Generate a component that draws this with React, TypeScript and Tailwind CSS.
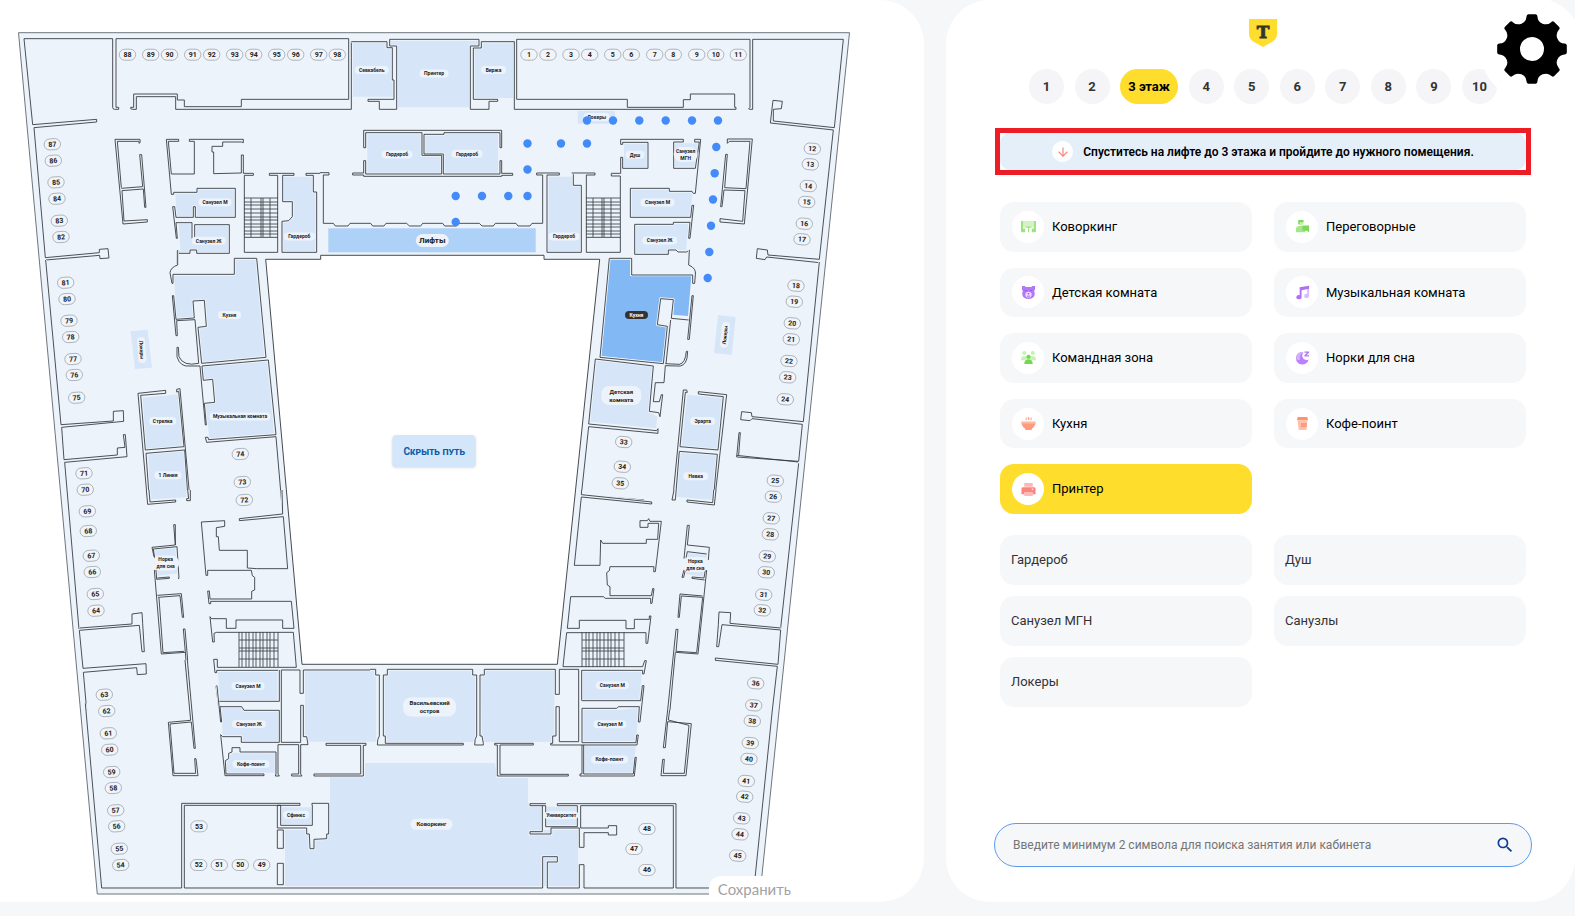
import type { ReactNode } from "react"
import { ArrowDown } from "lucide-react"
import { MdSearch } from "react-icons/md"

type Pin = [label: string, x: number, y: number]

/* Desk numbers, grouped by how they are tilted */
const straightDesks: Pin[] = [
  ["88", 127.5, 54.7], ["89", 150.7, 54.7], ["90", 169.5, 54.7], ["91", 192.7, 54.7], ["92", 211.7, 54.7],
  ["93", 234.7, 54.7], ["94", 253.7, 54.7], ["95", 276.7, 54.7], ["96", 295.7, 54.7], ["97", 318.7, 54.7],
  ["98", 337.3, 54.7], ["1", 529, 54.7], ["2", 548, 54.7], ["3", 571, 54.7], ["4", 589.7, 54.7],
  ["5", 612.7, 54.7], ["6", 631.3, 54.7], ["7", 654.7, 54.7], ["8", 673.3, 54.7], ["9", 696.7, 54.7],
  ["10", 715.7, 54.7], ["11", 738.3, 54.7], ["46", 647, 870], ["47", 634, 849], ["48", 647, 829],
  ["53", 199, 826.3], ["52", 198.7, 865], ["51", 219.3, 865], ["50", 240.3, 865], ["49", 261.7, 865],
]

const leftDesks: Pin[] = [
  ["87", 52.3, 144.3], ["86", 53.3, 160.7], ["85", 56, 182.3], ["84", 57, 198.7], ["83", 59.3, 220.7],
  ["82", 61, 237], ["81", 65.7, 282.7], ["80", 67, 299], ["79", 69, 320.7], ["78", 70.7, 337],
  ["77", 73, 359], ["76", 74.3, 375], ["75", 76.7, 397.7], ["71", 84, 473.3], ["70", 85.3, 489.7],
  ["69", 87.3, 511.3], ["68", 88.3, 531], ["67", 91.3, 555.7], ["66", 92.3, 572], ["65", 95.3, 594],
  ["64", 96, 610.7], ["63", 104.3, 694.7], ["62", 106.7, 711], ["61", 108.3, 733.3], ["60", 109.7, 749.7],
  ["59", 111.7, 772], ["58", 113.3, 788], ["57", 115.7, 810.3], ["56", 116.7, 826.3], ["55", 119.3, 848.7],
  ["54", 120.7, 865], ["74", 240.3, 454], ["73", 242.3, 482], ["72", 244.3, 500],
]

const rightDesks: Pin[] = [
  ["12", 812.3, 148.7], ["13", 810.3, 164.3], ["14", 808.3, 186], ["15", 806.7, 202], ["16", 804.3, 223.7],
  ["17", 802, 239.3], ["18", 796, 285.7], ["19", 794.3, 301.7], ["20", 792.3, 323.3], ["21", 791.3, 339.3],
  ["22", 789, 361], ["23", 787.7, 377.3], ["24", 785.3, 399.3], ["25", 775.3, 480.7], ["26", 773.3, 496.7],
  ["27", 771.3, 518.3], ["28", 770.3, 534.3], ["29", 767.3, 556.3], ["30", 766.3, 572.3], ["31", 763.7, 594.7],
  ["32", 762.3, 610.3], ["36", 755.7, 683.3], ["37", 753.7, 705.3], ["38", 752.3, 721], ["39", 750.3, 743],
  ["40", 749, 759], ["41", 746.3, 781], ["42", 744.7, 796.7], ["43", 741.7, 818.3], ["44", 740, 834.3],
  ["45", 737.7, 855.7], ["33", 623.7, 442], ["34", 622.3, 466.7], ["35", 620.3, 483.3],
]

interface RoomLabel {
  text: string
  x: number
  y: number
  w: number
  size?: number
  rotate?: number
  dark?: boolean
}

const roomLabels: RoomLabel[] = [
  { text: "Севкабель", x: 371.7, y: 70, w: 34 },
  { text: "Принтер", x: 434, y: 73.5, w: 29 },
  { text: "Биржа", x: 493.5, y: 70, w: 25 },
  { text: "Гардероб", x: 397, y: 154.5, w: 31 },
  { text: "Гардероб", x: 467, y: 153.7, w: 31 },
  { text: "Локеры", x: 596.7, y: 117, w: 26 },
  { text: "Лифты", x: 432.3, y: 240.5, w: 33, size: 8 },
  { text: "Гардероб", x: 299.3, y: 236.5, w: 31 },
  { text: "Гардероб", x: 564, y: 236.5, w: 31 },
  { text: "Санузел М", x: 215, y: 202.3, w: 33 },
  { text: "Санузел Ж", x: 208.7, y: 240.7, w: 34 },
  { text: "Душ", x: 635, y: 154.7, w: 19 },
  { text: "Санузел\nМГН", x: 685.7, y: 154.5, w: 24 },
  { text: "Санузел М", x: 657.5, y: 202.5, w: 34 },
  { text: "Санузел Ж", x: 659.7, y: 240.5, w: 35 },
  { text: "Кухня", x: 229.5, y: 315, w: 23 },
  { text: "Кухня", x: 636.5, y: 315, w: 23, dark: true },
  { text: "Детская\nкомната", x: 621.3, y: 395.5, w: 40, size: 6 },
  { text: "Музыкальная комната", x: 240, y: 416.5, w: 61 },
  { text: "Стрелка", x: 162.7, y: 421, w: 27 },
  { text: "1 Линия", x: 168, y: 475.3, w: 27 },
  { text: "Эрарта", x: 702.7, y: 421, w: 25 },
  { text: "Невка", x: 695.7, y: 476.3, w: 25 },
  { text: "Норка\nдля сна", x: 165.7, y: 563, w: 27 },
  { text: "Норка\nдля сна", x: 695.3, y: 564.5, w: 27 },
  { text: "Санузел М", x: 248, y: 686, w: 33 },
  { text: "Санузел Ж", x: 249, y: 724, w: 34 },
  { text: "Кофе-поинт", x: 251, y: 764, w: 37 },
  { text: "Васильевский\nостров", x: 429.5, y: 707, w: 53, size: 6 },
  { text: "Коворкинг", x: 431.5, y: 824.3, w: 42, size: 6 },
  { text: "Сфинкс", x: 296, y: 814.7, w: 26 },
  { text: "Университет", x: 561.3, y: 815.3, w: 34 },
  { text: "Санузел М", x: 612.3, y: 685.3, w: 33 },
  { text: "Санузел М", x: 610, y: 724.3, w: 33 },
  { text: "Кофе-поинт", x: 609.5, y: 759.5, w: 37 },
  { text: "Локеры", x: 141.7, y: 350, w: 26, rotate: 86 },
  { text: "Локеры", x: 725, y: 335, w: 26, rotate: -84 },
]

const route: [number, number][] = [
  [455.7, 222], [455.7, 196], [482, 196], [508.3, 196], [527.5, 196], [527.5, 169.5], [527.5, 143.5],
  [561, 143.5], [587, 143.5], [587, 120.5], [613, 120.5], [639.3, 120.5], [665.7, 120.5], [692, 120.5],
  [718, 120.5], [716.3, 147], [714.7, 173.3], [713, 199.5], [711, 225.7], [709.3, 252], [707.7, 278],
]

interface Wing {
  x: number
  y: number
  rooms: string
  walls: string
}

/* Every wing is drawn at three times the plan's scale, from its own top left corner */
const wings: Wing[] = [
  {
    x: 0,
    y: 20,
    rooms:
      "M526 518H592V508H704V590H530ZM536 612H576V655H584V616H686V698H592L568 690V698H542ZM852 470H914L936 472V516H948V694H848V604H866L878 590V545H852Z",
    walls:
      "M338 56H72L98 314L290 298V306L102 323L136 713L298 698V688L324 686L327 714L300 716L299 706L138 720M338 56V262Q338 268 344 268H356V262H348V56H1046V238H724V260H553V240H532V222H401V262H392Q390 268 398 268H409V230H527V268H1054V65" +
      "M364 503L352 364H417V370Q423 370 420 358H345L369 612L442 606V599L372 603L366 512L430 507L434 562H438L425 404H419L428 500L364 505" +
      "M536 364V358H499L514 523H521V517H591V505H706V592H586V560H580V592H528L524 560H518L529 655H532L528 608H576V655M505 364H536M505 364L514 462H583V364H568V358H730V368L724 366H668V379H636V396H641V461L724 459V405H730V460" +
      "M584 655V614H688V700H590V690H570V700H536V692H531V736Q518 738 510 750" +
      "M760 466V460H730M760 466H733V697H833V466H808V460H882V466H848V545H877V590L866 602L846 604V697H950V516H940V466H918V460H987M733 652H833",
  },
  {
    x: 320,
    y: 20,
    rooms:
      "M98 68H200V84H220V230H98ZM212 62H474V78H450V262H233V80H212ZM486 70H580V234H463V84H486ZM142 343H303V405H364V460H142ZM315 347L372 342H534V460H372V402H315ZM773 273H885V311H773ZM686 470H758V498H782V695H684Z",
    walls:
      "M94 65H201V83H217V180H222V238H144V244H178V268H230V78H209V58H477V78H451V268H507V244H533V238H460V84H484V65H583V268H750M750 58H590V238H750" +
      "M131 383V331H545V383H540V338H372V343H312V402H370V462H540V422H545V460H578V466H545V469H131V465H98V459H131V422H137V462H365V406H306V338H137V383Z" +
      "M0 458H27V465H10V610H40L46 618H84L90 610H152L158 618H192L198 610H260L268 618H302L308 610H368L374 618H410L416 610H478L486 618H520L526 610H588L594 618H630L636 610H668V465H650V459H718V465H681V697H784V496H760V459H825V466H800",
  },
  {
    x: 570,
    y: 20,
    rooms:
      "M162 370H232V442H162ZM313 370H384L374 440H313ZM184 508H296V516H368L360 590H184ZM198 617H310V611H356L348 690H318L295 698H198Z",
    walls:
      "M0 58H540V262Q532 268 540 268H548V58H820L793 323L610 303V268L634 266L637 244L609 241L601 309L790 330L748 718L594 705L592 690L562 686L559 715L585 719L590 711L748 728M0 238H172V262H340V239H361V222H494V262H498V268H0" +
      "M152 460V412H158V445H234V367H158V373H152V358H340V366H311V445H376L388 366H374V358H392L376 520H370L366 514H298V505H181V592H362L366 556H371L360 655H356L360 607H310V613H194V703H295V690H318L324 696H350L358 690V735L374 745" +
      "M5 459H75V465H49V697H151V468H124V460H152M49 652H151" +
      "M472 370V357H547L523 612L450 606V596L518 604L525 512L462 510L456 560H452L467 403H472L464 503L528 506L540 364H478Z",
  },
  {
    x: 20,
    y: 250,
    rooms:
      "M462 77H646V30H707L733 318L548 337L538 234L562 230L556 154L522 150L519 200L470 204ZM550 350L742 334L762 550L568 566L556 460L584 457L580 390L552 388ZM368 443L473 433L490 588L378 598ZM384 611L492 602L502 742L392 748ZM332 244L383 239L396 353L345 357Z",
    walls:
      "M77 30L123 524L280 513V484L310 482L311 514L125 532L132 629L292 615V594L315 592L310 554H316L321 620L134 637L177 1138" +
      "M473 0V45Q452 52 450 68L456 100H459V73H643V25H710L738 322L545 340L534 232L559 229L553 151L519 153L523 204L468 208L461 137H457L468 257H472L470 212L525 209L536 340Q490 350 477 320L475 292H471V320Q480 352 510 348H540L556 525H559L553 460L584 457L578 388L550 391L546 348L745 330L768 554L566 569L564 562H556L560 577L768 560L788 792" +
      "M437 421L354 430L382 750M437 421V430L362 436L376 600L492 590L476 424L470 426V418L480 416L510 750M388 750L378 610L494 600L504 745",
  },
  {
    x: 550,
    y: 250,
    rooms:
      "M140 332L308 348L298 486L322 500L318 535L120 515ZM412 434L518 444L502 598L394 588ZM392 607L500 616L488 750L378 740ZM504 195L557 201L545 315L492 309Z",
    walls:
      "M418 0L416 45Q440 55 436 75L434 100H428V75H245V25H178L150 322L340 341L352 229L322 224L332 146L370 149L364 205L416 210M362 210L348 341M426 137H430L418 268H413Z" +
      "M346 341L388 343Q406 340 409 304H413L411 325Q404 352 380 348L346 347L342 398H316L310 455H328L334 434H338L330 500L326 488L298 484L310 348L136 327L116 522L320 542L324 536L324 550L116 530L94 735L282 750" +
      "M808 36L760 515L606 500L604 488L575 485L572 509L600 512L606 506L757 523L746 634L560 621L567 548H571L566 615M746 640L692 1134M560 616L744 636" +
      "M368 750L400 420H410L412 427L406 427L390 590L504 600L520 440L445 432V425L530 434L494 750M376 750L388 604L502 613L490 750",
  },
  {
    x: 50,
    y: 490,
    rooms: "M312 180L375 172L384 250L318 258ZM504 545H684V632H510Z",
    walls:
      "M289 0L293 43L377 36V30L300 36L297 0M421 0V32H410V26H416L413 0" +
      "M314 205L310 177L381 170L387 265H384M376 165V104H371L376 165L306 172L312 200M313 240L334 492L406 487L400 417H405L426 660M318 240L320 268L358 265V261L322 264M324 322L390 317L397 382H401L394 311L322 316M327 324L339 488L402 484M420 660L406 487" +
      "M696 0L698 72L568 86V92L700 80L713 236H620L592 234V181H508L505 140H499V113L524 109V92L454 96L468 256H473V241H604L607 257L614 262V300L605 304V327H480L478 303H473L477 341H482V334H724L732 415H698V390H558V415H529V386H484L480 380L488 456H493L492 430L500 427H730L739 532H502V508H491L495 548H500V541H686V634H507L502 588H498L507 660" +
      "M90 414L246 402V372L276 368L278 400L283 485H276L268 406L88 421L99 535L288 521L289 552L262 554L260 533L100 547L110 660",
  },
  {
    x: 540,
    y: 490,
    rooms: "M128 545H306L298 628H128ZM442 188H500L494 260L436 252Z",
    walls:
      "M125 0L124 14L335 36V42L124 21L103 226H180L182 150L188 160H319V148H353L356 100H324V112H300V92H322L326 86L330 94H364L346 245H341L342 230H210L208 242L200 248L202 285L210 290V317H334L338 296H342L336 340H332V325H196L190 320H92L82 415H118V391H258V416H283V388H328V378H333L323 460H318V428H80L69 530H308L314 512H319L312 552H308V541H125V631H300L308 587H313L302 660" +
      "M402 0L396 30H406V26M528 0L523 45L441 36V30L518 38L521 0" +
      "M432 206L442 106H448L442 165L508 172L505 210M438 205L442 185L500 192M432 240L426 262H431L436 240M500 240L474 492L408 487L414 418H408L383 660M496 240L492 264L456 261V265L494 270M488 318L420 312L414 382H418L424 318L488 322L470 488L410 484M390 660L406 487" +
      "M722 414L570 400L572 368L537 366L535 404L530 470H536L546 404L722 420L714 523L526 504V511L712 529L697 660",
  },
  {
    x: 70,
    y: 660,
    rooms: "M454 144H515L522 154H626V245H514V228H458ZM470 304L486 278H510L616 280V338H470ZM705 32H919V245H712V228H705ZM635 442H725V494H635Z",
    walls:
      "M46 130L95 684H335V430H690V436H343V684H900" +
      "M345 0L362 181L295 187L309 347H384L378 296H374L377 340H312L300 192L364 186L372 265H376L352 0" +
      "M441 78L452 186H455L450 140H515L522 151H628V247H514V230H458L452 224L465 347H582V342H468L466 302L476 296V280L486 276V263H510V276H618V342L616 348H628L624 342V254H686V342H665V348H696L692 342V254H714L710 230H700V136H692V247H634V30H690V100H700V30H900" +
      "M768 250H888V256H880V348H732V342H872V256H768Z" +
      "M628 30V124H448M632 436H622V504H710V522H718L720 566H732V538L770 536V522H776V430H726V436H727V496H632V436M622 510H640V565H622ZM622 610H640V674H622Z",
  },
  {
    x: 370,
    y: 650,
    rooms:
      "M50 62H306V76H316V276H42V76ZM332 76L342 62H553V276H336ZM638 180H742L806 174L798 274H638ZM643 288H798L788 368H643ZM527 470H622V526H527Z",
    walls:
      "M0 58H17V75H28V258Q22 265 22 285H280V280H46V258H40V75H52V58H308V75H320V258Q314 265 314 285H340V280L336 258H330V75H343V58H556V133H568V58H626V275H568V170H558V258H548V280H542V285H801L805 255H800L798 278H636V175H740L746 170H808L805 216H810L822 107H817L812 152H636" +
      "M374 280H490V285H390V373H595V378H382V285H374ZM636 285V372H630V378H793L799 322H795L790 372H641V285" +
      "M893 180L880 293H886L893 215L964 221L948 377H873L878 328H883L880 370H943L957 226L895 210L899 180" +
      "M1207 180L1152 714H918V461H562V467H622V530H527V467H480V461H528M517 467V545H480V552H543V534H628V592H642V548H715V555H740V527H715V534H632V467H910V714H642V644H628V714H532V636H562V620H518V714H0",
  },
]

/* Treads of the four staircases */
const stairs =
  "M244 198H278M244 202H278M244 205H278M244 209H278M244 213H278M244 217H278M244 220H278M244 224H278M244 227H278M244 231H278M244 234H278M251 198V237M261 198V237M263 198V237M270 198V237" +
  "M586 198H620M586 202H620M586 205H620M586 209H620M586 213H620M586 217H620M586 220H620M586 224H620M586 227H620M586 231H620M586 234H620M593 198V237M602 198V237M604 198V237M611 198V237" +
  "M239 632V667M242 632V667M246 632V667M249 632V667M253 632V667M256 632V667M260 632V667M263 632V667M267 632V667M270 632V667M274 632V667M278 632V667M239 640H278M239 648H278M239 651H278M239 659H278" +
  "M582 632V667M586 632V667M589 632V667M593 632V667M597 632V667M600 632V667M604 632V667M608 632V667M611 632V667M615 632V667M619 632V667M624 632V667M582 640H624M582 648H624M582 651H624M582 659H624"

function Desk({ pin, tilt = 0 }: { pin: Pin; tilt?: number }) {
  const [label, x, y] = pin
  return (
    <g transform={`translate(${x} ${y}) rotate(${tilt})`}>
      <rect x={-8.2} y={-5.5} width={16.4} height={11} rx={5.5} fill="#f1f5fa" stroke="#858b93" strokeWidth={0.6} />
      <text y={2.4} textAnchor="middle" className="fill-[#222] text-[7px] font-bold">
        {label}
      </text>
    </g>
  )
}

function RoomTag({ label }: { label: RoomLabel }) {
  const size = label.size ?? 5
  const lines = label.text.split("\n")
  const lineHeight = size + 2
  const height = lineHeight * lines.length + (size > 5 ? 3 : 1)
  return (
    <g transform={`translate(${label.x} ${label.y}) rotate(${label.rotate ?? 0})`}>
      <rect
        x={-label.w / 2}
        y={-height / 2}
        width={label.w}
        height={height}
        rx={Math.min(height / 2, 8)}
        fill={label.dark ? "#333" : "#edf3fa"}
      />
      {lines.map((line, i) => (
        <text
          key={line}
          y={(i - (lines.length - 1) / 2) * lineHeight + size * 0.36}
          textAnchor="middle"
          fontSize={size}
          fontWeight={700}
          fill={label.dark ? "#fff" : "#222"}
        >
          {line}
        </text>
      ))}
    </g>
  )
}

function FloorMap() {
  return (
    <svg viewBox="0 0 924 902" className="block w-full" role="img" aria-label="План 3 этажа">
      <path d="M18.5 32.7H849.5L760 894H97.3Z" fill="#ecf3fa" stroke="#6f757b" />
      <path
        d="M365 763H495L497 778H528V803L543 807V830H578V886H285V830H308L311 850L314 840L328 838L330 800V777H365Z"
        fill="#d6e6f8"
      />
      <rect x={328.3} y={228.3} width={207.4} height={24} fill="#add1f7" />
      {wings.map((wing) => (
        <g key={`${wing.x}-${wing.y}`} transform={`translate(${wing.x} ${wing.y}) scale(0.33333)`}>
          <path d={wing.rooms} fill="#d6e6f8" />
        </g>
      ))}
      <path
        transform="translate(550 250) scale(0.33333)"
        d="M180 28H240V78H424L414 198L370 194L372 146L330 144L322 226L350 230L338 338L154 318Z"
        fill="#82b8f3"
      />
      {wings.map((wing) => (
        <g
          key={`${wing.x}-${wing.y}`}
          transform={`translate(${wing.x} ${wing.y}) scale(0.33333)`}
          fill="none"
          strokeLinejoin="round"
        >
          <path d={wing.walls} stroke="#ecf3fa" strokeWidth={8} />
          <path d={wing.walls} stroke="#33373b" strokeWidth={2.6} />
        </g>
      ))}
      <path
        d="M265.7 259.3H320.7V255.3H544V259.3H599.7L557.3 664.3H302Z"
        fill="#fff"
        stroke="#33373b"
        strokeWidth={0.9}
      />
      <path d={stairs} stroke="#33373b" strokeWidth={0.8} fill="none" />
      {straightDesks.map((pin) => (
        <Desk key={pin[0]} pin={pin} />
      ))}
      {leftDesks.map((pin) => (
        <Desk key={pin[0]} pin={pin} tilt={-4} />
      ))}
      {rightDesks.map((pin) => (
        <Desk key={pin[0]} pin={pin} tilt={5} />
      ))}
      {roomLabels.map((label) => (
        <RoomTag key={`${label.x}-${label.y}`} label={label} />
      ))}
      {route.map(([x, y]) => (
        <circle key={`${x}-${y}`} cx={x} cy={y} r={4.2} fill="#428bf9" />
      ))}
    </svg>
  )
}

/* Eight teeth with round gullets between them */
const polar = (r: number, deg: number) => {
  const a = ((deg - 90) * Math.PI) / 180
  return `${(r * Math.cos(a)).toFixed(2)} ${(r * Math.sin(a)).toFixed(2)}`
}
const gearPath =
  Array.from({ length: 8 }, (_, i) => {
    const a = i * 45
    return `${i === 0 ? "M" : "L"}${polar(33, a - 9.5)}Q${polar(35, a - 9)} ${polar(35, a - 6)}L${polar(35, a + 6)}Q${polar(35, a + 9)} ${polar(33, a + 9.5)}A8.2 8.2 0 0 0 ${polar(33, a + 35.5)}`
  }).join("") + "ZM0 -12A12 12 0 1 0 0 12A12 12 0 1 0 0 -12Z"

function Logo() {
  return (
    <svg viewBox="0 0 28 28" className="size-7" role="img" aria-label="Т">
      <path d="M0 0H28V14C28 19.5 25.5 21.5 22 23.5L14 28L6 23.5C2.5 21.5 0 19.5 0 14Z" fill="#ffdd2d" />
      <text
        x={14}
        y={19}
        textAnchor="middle"
        fontFamily="'DejaVu Serif', serif"
        fontWeight={700}
        fontSize={17}
        fill="#333"
        stroke="#333"
        strokeWidth={0.8}
      >
        T
      </text>
    </svg>
  )
}

const icons: Record<string, ReactNode> = {
  coworking: (
    <>
      <path d="M1 2H15V9H1Z" fill="#d3f3c6" />
      <path d="M0 2H2.2V10H4.5V14H1Q0 14 0 13ZM16 2H13.8V10H11.5V14H15Q16 14 16 13ZM5 8H11V9.3H8.6V14H7.4V9.3H5Z" fill="#9fe283" />
    </>
  ),
  meeting: (
    <>
      <path d="M1 14V11Q1 7.5 5 7.5H7.5Q11 7.5 11 11V14Z" fill="#a5e58b" />
      <path d="M4 1H9V5Q8.500 7 6.500 7Q4 7 4 4.500Z" fill="#c7efb6" />
      <path d="M3.500 1H9V3.500H5V5.500H3.500ZM8 7H15V14L12.500 12.500H9Q8 12.500 8 11.500Z" fill="#7bd957" />
    </>
  ),
  kids: (
    <>
      <path d="M1 1H4L5 2H11L12 1H15V5L14 6Q15 8 14.500 11Q13 15 8 15Q3 15 1.500 11Q1 8 2 6L1 5Z" fill="#b377f9" />
      <ellipse cx={8} cy={10.300} rx={3.400} ry={3} fill="#ead9ff" />
      <path d="M6.800 8.800H9.200L8 10.500ZM6.500 11.500H9.500V12.300H6.500ZM4 5.500H6V6.500H4ZM10 5.500H12V6.500H10Z" fill="#8b45e6" />
    </>
  ),
  team: (
    <>
      <path d="M3.500 1A2.200 2.200 0 1 0 3.600 1ZM12.500 1A2.200 2.200 0 1 0 12.600 1ZM0 11Q0 6.500 3.500 6.500Q6 6.500 6.500 9L4.500 11ZM16 11Q16 6.500 12.500 6.500Q10 6.500 9.500 9L11.500 11Z" fill="#c9f0b8" />
      <path d="M8 5A2.300 2.300 0 1 0 8.100 5ZM3.500 15Q3.500 9.800 8 9.800Q12.500 9.800 12.500 15Z" fill="#73d84e" />
    </>
  ),
  kitchen: (
    <>
      <path d="M5 4Q5 2 6 1.500V4ZM7.500 4V1Q9 .5 8.800 4ZM10.200 4Q10 2 11 1.500L11.300 4Z" fill="#ffab93" stroke="#ffab93" strokeWidth={0.500} />
      <path d="M.5 6H15.500Q15.500 11 11.500 13.500V15H4.500V13.500Q.5 11 .5 6Z" fill="#ff9a7b" />
      <path d="M.5 6H15.500V8H.5Z" fill="#ffbda9" />
    </>
  ),
  printer: (
    <>
      <path d="M3.500 1H12.500V5H3.500ZM3.500 11H12.500V15H3.500Z" fill="#ffb9b5" />
      <path d="M2 5.500H14Q15.500 5.500 15.500 7V13H12.500V11H3.500V13H.5V7Q.5 5.500 2 5.500Z" fill="#fb8680" />
      <path d="M11.500 7H13V8.300H11.500Z" fill="#fff" />
    </>
  ),
  music: (
    <>
      <path d="M13 1H15V11.500A2.600 2.200 0 1 1 13 9.500Z" fill="#d9bcfc" />
      <path d="M5 2.500L15 .8V4L7 5.500V13A2.800 2.300 0 1 1 5 10.800Z" fill="#b06ff6" />
    </>
  ),
  sleep: (
    <>
      <path d="M7 2A6.800 6.800 0 1 0 14.500 10Q11 11.500 8.800 9Q6.500 6 9 3Z" fill="#bb81fa" />
      <path d="M7 2Q1 3 1.200 9Q3 12 5.500 10Q4 5 9 3Z" fill="#d3affc" />
      <path d="M10 1.500H15V3L12.300 5.500H15V7H10V5.500L12.700 3H10Z" fill="#b578f8" />
    </>
  ),
  coffee: (
    <>
      <path d="M3 1H13L14 4.500H2Z" fill="#ff9273" />
      <path d="M2.800 4.500H13.200L12 15H4Z" fill="#ffc0ac" />
      <path d="M6 7.500H12.800L12.300 12H6.500Z" fill="#ff9b7e" />
    </>
  ),
}

const floors = ["1", "2", "3 этаж", "4", "5", "6", "7", "8", "9", "10"]

const categories = [
  { icon: "coworking", name: "Коворкинг" },
  { icon: "meeting", name: "Переговорные" },
  { icon: "kids", name: "Детская комната" },
  { icon: "music", name: "Музыкальная комната" },
  { icon: "team", name: "Командная зона" },
  { icon: "sleep", name: "Норки для сна" },
  { icon: "kitchen", name: "Кухня" },
  { icon: "coffee", name: "Кофе-поинт" },
  { icon: "printer", name: "Принтер", active: true },
]

const services = ["Гардероб", "Душ", "Санузел МГН", "Санузлы", "Локеры"]

export default function App() {
  return (
    <main className="relative grid min-h-screen grid-cols-[924fr_629fr] gap-[22px] overflow-hidden bg-[#f6f7f9] pb-[14px] font-[Roboto,sans-serif] text-black">
      {/* Floor plan */}
      <section className="relative min-w-0 overflow-hidden rounded-r-[44px] bg-white">
        <FloorMap />
        <button
          type="button"
          className="absolute top-1/2 left-[47%] h-8 w-[83px] -translate-1/2 rounded-sm bg-[#d4e7fa] text-[10px] font-bold whitespace-nowrap text-[#0d5ca8] shadow-sm [font-variant-caps:small-caps]"
        >
          Скрыть путь
        </button>
        <button
          type="button"
          className="absolute right-[124px] bottom-0 h-[26px] rounded-t-xl bg-white px-[9px] font-[Lato,sans-serif] text-[15px] text-[#a3a3a3]"
        >
          Сохранить
        </button>
      </section>

      {/* Navigation */}
      <section className="flex min-w-0 flex-col rounded-[44px] bg-white pt-[19px] pr-[43px] pb-[35px] pl-[48px]">
        <div className="flex justify-center">
          <Logo />
        </div>

        <nav className="mx-auto mt-[22px] flex w-[468px] max-w-full justify-between text-[13px] font-bold text-[#333]">
          {floors.map((floor) => (
            <button
              key={floor}
              type="button"
              className={
                floor === "3 этаж"
                  ? "h-[35px] w-[58px] rounded-full bg-[#ffdd2d] whitespace-nowrap text-black"
                  : "size-[35px] rounded-full bg-[#f5f5f7]"
              }
            >
              {floor}
            </button>
          ))}
        </nav>

        <div className="mx-px mt-6 border-[5px] border-[#ee1c25]">
          <div className="flex h-[37px] items-center justify-center gap-[10px] rounded-[10px] bg-[#e4effa]">
            <span className="flex size-[21px] items-center justify-center rounded-full bg-white">
              <ArrowDown className="size-[14px] text-[#f8857d]" strokeWidth={2} />
            </span>
            <p className="text-[12px] font-semibold">Спуститесь на лифте до 3 этажа и пройдите до нужного помещения.</p>
          </div>
        </div>

        <div className="mx-[6px] mt-[27px] grid h-[312px] grid-cols-2 grid-rows-5 gap-x-[22px] gap-y-4">
          {categories.map((category) => (
            <button
              key={category.name}
              type="button"
              className={`flex items-center gap-2 rounded-[14px] px-3 text-left text-[13px] ${
                category.active ? "bg-[#ffdd2d]" : "bg-[#f6f7f9]"
              }`}
            >
              <span className="flex size-8 shrink-0 items-center justify-center rounded-full bg-white">
                <svg viewBox="0 0 16 16" className="size-[15px]" aria-hidden="true">
                  {icons[category.icon]}
                </svg>
              </span>
              {category.name}
            </button>
          ))}
        </div>

        <div className="mx-[6px] mt-[21px] grid grid-cols-2 gap-x-[22px] gap-y-[11px]">
          {services.map((service) => (
            <button
              key={service}
              type="button"
              className="h-[50px] rounded-[14px] bg-[#f6f7f9] px-[11px] text-left text-[13px] text-[#333]"
            >
              {service}
            </button>
          ))}
        </div>

        <form className="mt-auto flex h-11 items-center rounded-full border border-[#5b9cf0] bg-[#f6f7f9] pr-4 pl-[18px]">
          <input
            type="search"
            aria-label="Поиск"
            placeholder="Введите минимум 2 символа для поиска занятия или кабинета"
            className="min-w-0 flex-1 bg-transparent text-[12px] outline-none placeholder:text-[#757575]"
          />
          <button type="submit" aria-label="Найти">
            <MdSearch className="size-5 text-[#0b3d91]" />
          </button>
        </form>
      </section>

      <button
        type="button"
        aria-label="Настройки"
        className="absolute -top-[3px] -right-[9px] flex size-[104px] items-center justify-center rounded-full bg-white"
      >
        <svg viewBox="-35 -35 70 70" className="size-[70px]" aria-hidden="true">
          <path d={gearPath} fillRule="evenodd" />
        </svg>
      </button>
    </main>
  )
}
